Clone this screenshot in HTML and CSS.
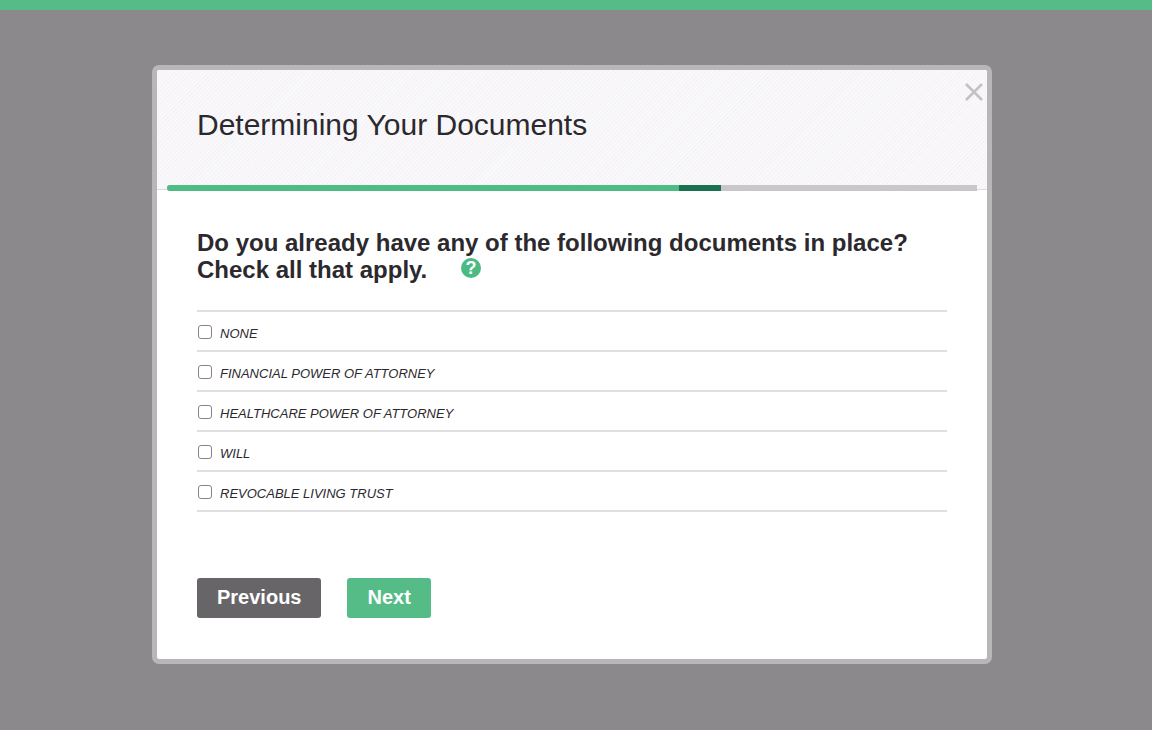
FILE: index.html
```html
<!DOCTYPE html>
<html lang="en">
<head>
  <meta charset="UTF-8">
  <meta name="viewport" content="width=device-width, initial-scale=1.0">
  <title>Determining Your Documents</title>
  <link rel="stylesheet" href="styles.css">
</head>
<body>
  <div class="modal" role="dialog" aria-labelledby="modalTitle">
    <div class="modal-header">
      <h1 id="modalTitle">Determining Your Documents</h1>
      <button type="button" class="close" aria-label="Close">
        <svg width="18" height="18" viewBox="0 0 18 18"><path d="M1 1 L17 17 M17 1 L1 17" stroke="#c3c1c4" stroke-width="2.6" fill="none"/></svg>
      </button>
      <div class="progress">
        <div class="done"></div>
        <div class="current"></div>
      </div>
    </div>

    <form class="modal-body">
      <h2>Do you already have any of the following documents in place?<br>Check all that apply.
        <button type="button" class="help" aria-label="Help">?</button>
      </h2>

      <ul class="options">
        <li><label><input type="checkbox" name="docs" value="none">NONE</label></li>
        <li><label><input type="checkbox" name="docs" value="financial">FINANCIAL POWER OF ATTORNEY</label></li>
        <li><label><input type="checkbox" name="docs" value="healthcare">HEALTHCARE POWER OF ATTORNEY</label></li>
        <li><label><input type="checkbox" name="docs" value="will">WILL</label></li>
        <li><label><input type="checkbox" name="docs" value="trust">REVOCABLE LIVING TRUST</label></li>
      </ul>

      <div class="actions">
        <button type="button" class="btn previous">Previous</button>
        <button type="submit" class="btn next">Next</button>
      </div>
    </form>
  </div>
</body>
</html>
```
FILE: styles.css
```css
* {
  box-sizing: border-box;
}

body {
  margin: 0;
  padding: 55px 160px 0 152px;
  background: #8c898c;
  border-top: 10px solid #55bc88;
  font-family: "Liberation Sans", Arial, sans-serif;
  color: #2b292e;
}

.modal {
  background: #fff;
  border: 5px solid #b8b6b9;
  border-radius: 7px;
}

/* header */
.modal-header {
  position: relative;
  height: 120px;
  padding: 36px 40px 0;
  border-bottom: 1px solid #dcdadd;
  border-radius: 2px 2px 0 0;
  background: repeating-linear-gradient(135deg, #faf9fb 0, #faf9fb 1px, #f5f3f6 2px, #f5f3f6 3px);
}

h1 {
  margin: 0;
  font-size: 30px;
  line-height: 38px;
  font-weight: normal;
}

.close {
  position: absolute;
  top: 13px;
  right: 4px;
  padding: 0;
  border: none;
  background: none;
}

.close svg {
  display: block;
}

.progress {
  position: absolute;
  left: 10px;
  right: 10px;
  bottom: -2px;
  display: flex;
  height: 6px;
  background: #c9c7ca;
  border-radius: 3px 0 0 3px;
  overflow: hidden;
}

.done {
  width: 63.2%;
  background: #4fbb85;
}

.current {
  width: 5.2%;
  background: #1c7150;
}

/* question */
.modal-body {
  padding: 39px 40px 41px;
}

h2 {
  margin: 0 0 27px;
  font-size: 24px;
  line-height: 27px;
}

.help {
  width: 20px;
  height: 20px;
  margin-left: 27px;
  padding: 0;
  border: none;
  border-radius: 50%;
  background: #4cba83;
  color: #fff;
  font: bold 18px/20px "Liberation Sans", Arial, sans-serif;
  vertical-align: 4px;
}

.options {
  list-style: none;
  margin: 0;
  padding: 0;
  border-top: 2px solid #dfdee0;
}

.options li {
  height: 40px;
  border-bottom: 2px solid #dfdee0;
}

.options label {
  display: flex;
  align-items: center;
  height: 40px;
  padding-top: 2px;
  font-size: 13px;
  font-style: italic;
}

.options input {
  appearance: none;
  width: 14px;
  height: 14px;
  margin: 0 8px 2px 1px;
  border: 1px solid #858387;
  border-radius: 3px;
  background: #fff;
}

.options input:checked {
  background: #55bc88;
}

/* buttons */
.actions {
  display: flex;
  gap: 26px;
  margin-top: 66px;
}

.btn {
  height: 40px;
  padding: 0 20px 2px;
  border: none;
  border-radius: 3px;
  color: #fff;
  font: bold 20px "Liberation Sans", Arial, sans-serif;
}

.previous {
  background: #686569;
}

.next {
  background: #55bc88;
}
```
